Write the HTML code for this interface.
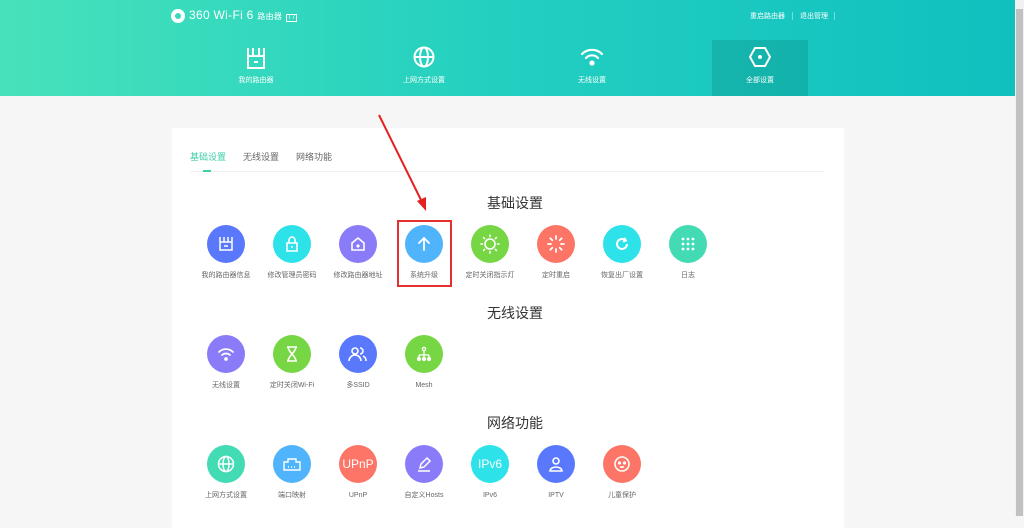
<!DOCTYPE html>
<html><head><meta charset="utf-8"><style>
*{margin:0;padding:0;box-sizing:border-box}
body{width:1024px;height:516px;overflow:hidden;background:#f6f6f6;font-family:"Liberation Sans","Noto Sans CJK SC",sans-serif;position:relative}
.hd{position:absolute;left:0;top:0;width:1015px;height:96px;background:linear-gradient(90deg,#47e2bb 0%,#22cfc0 50%,#10c0bf 100%)}
.a{position:absolute}
.nav{position:absolute;top:40px;width:96px;height:56px;text-align:center;color:#fff;font-size:7px;line-height:10px}
.nav svg{display:block;margin:6px auto 0}
.nav span{position:absolute;left:0;right:0;top:36px}
.card{position:absolute;left:172px;top:128px;width:672px;height:400px;background:#fff}
.ic{position:absolute;width:38px;height:38px;border-radius:50%;display:flex;align-items:center;justify-content:center;color:#fff}
.lb{position:absolute;width:80px;text-align:center;font-size:7px;color:#666;line-height:10px;height:10px}
.tt{position:absolute;width:200px;text-align:center;font-size:14px;color:#333;line-height:18px}
.sb{position:absolute;left:1015px;top:0;width:9px;height:516px;background:#f1f1f1}
</style></head><body>
<div class="hd">
 <div class="a" style="left:171px;top:9px;width:14px;height:14px;border-radius:50%;background:#fff"></div>
 <div class="a" style="left:175px;top:13px;width:6px;height:6px;border-radius:50%;background:#3ad8bd"></div>
 <div class="a" style="left:189px;top:8px;color:#fff;font-size:12px;line-height:14px;letter-spacing:0.3px">360 Wi-Fi 6 <span style="font-size:8px">路由器</span> <span style="font-size:6px;border:1px solid #fff;padding:0 1px">T7</span></div>
 <div class="a" style="left:750px;top:12px;color:#fff;font-size:7px;line-height:9px">重启路由器</div>
 <div class="a" style="left:792px;top:12px;width:1px;height:8px;background:rgba(255,255,255,.4)"></div>
 <div class="a" style="left:800px;top:12px;color:#fff;font-size:7px;line-height:9px">退出管理</div>
 <div class="a" style="left:834px;top:12px;width:1px;height:8px;background:rgba(255,255,255,.4)"></div>
 <div class="nav" style="left:208px"><svg width="20" height="24" viewBox="0 0 20 24" fill="none" stroke="#fff" stroke-width="2"><path d="M2 2v8M7 2v8M13 2v8M18 2v8M2 10h16v12H2z M8 16h4"/></svg><span>我的路由器</span></div>
 <div class="nav" style="left:376px"><svg width="22" height="22" viewBox="0 0 22 22" fill="none" stroke="#fff" stroke-width="2"><circle cx="11" cy="11" r="9.5"/><ellipse cx="11" cy="11" rx="4" ry="9.5"/><path d="M1.5 11h19"/></svg><span>上网方式设置</span></div>
 <div class="nav" style="left:544px"><svg width="24" height="22" viewBox="0 0 24 22" fill="none" stroke="#fff" stroke-width="2.2" stroke-linecap="round"><path d="M2 8a14 14 0 0 1 20 0M6 12a8 8 0 0 1 12 0"/><circle cx="12" cy="17" r="1.5" fill="#fff"/></svg><span>无线设置</span></div>
 <div class="nav" style="left:712px;background:rgba(0,90,90,.18)"><svg width="24" height="22" viewBox="0 0 24 22" fill="none" stroke="#fff" stroke-width="2"><path d="M7 2h10l5 9-5 9H7L2 11z"/><circle cx="12" cy="11" r="1" fill="#fff"/></svg><span>全部设置</span></div>
</div>
<div class="card"></div>
<div class="a" style="left:190px;top:152px;font-size:9px;line-height:11px;color:#3ecfa8">基础设置</div>
<div class="a" style="left:243px;top:152px;font-size:9px;line-height:11px;color:#666">无线设置</div>
<div class="a" style="left:296px;top:152px;font-size:9px;line-height:11px;color:#666">网络功能</div>
<div class="a" style="left:190px;top:171px;width:635px;height:1px;background:#f0f0f0"></div>
<div class="a" style="left:203px;top:170px;width:8px;height:2px;background:#3ecfa8"></div>
<div class="tt" style="left:415px;top:194px">基础设置</div>
<div class="tt" style="left:415px;top:304px">无线设置</div>
<div class="tt" style="left:415px;top:414px">网络功能</div>

<div class="ic" style="left:207px;top:225px;background:#5a78fb"><svg width="16" height="16" viewBox="0 0 16 16" fill="none" stroke="#fff" stroke-width="1.5"><path d="M2 1v5M6 1v5M10 1v5M14 1v5M2 6h12v8H2zM6 10h4"/></svg></div>
<div class="ic" style="left:273px;top:225px;background:#2ee2ea"><svg width="14" height="16" viewBox="0 0 14 16" fill="none" stroke="#fff" stroke-width="1.6"><path d="M4 7V4a3 3 0 0 1 6 0v3M2 7h10v8H2zM7 10v2"/></svg></div>
<div class="ic" style="left:339px;top:225px;background:#8a7cf9"><svg width="16" height="16" viewBox="0 0 16 16" fill="none" stroke="#fff" stroke-width="1.6"><path d="M2 7l6-5 6 5v7H2z"/><circle cx="8" cy="10" r=".8" fill="#fff"/></svg></div>
<div class="ic" style="left:405px;top:225px;background:#4fb4fb"><svg width="16" height="16" viewBox="0 0 16 16" fill="none" stroke="#fff" stroke-width="1.8" stroke-linecap="round"><path d="M8 14V2M3 7l5-5 5 5"/></svg></div>
<div class="ic" style="left:471px;top:225px;background:#76d644"><svg width="20" height="20" viewBox="0 0 20 20" fill="none" stroke="#fff" stroke-width="1.6" stroke-linecap="round"><circle cx="10" cy="10" r="5"/><path d="M10 1v1.5M10 17.5V19M1 10h1.5M17.5 10H19M3.6 3.6l1 1M15.4 15.4l1 1M3.6 16.4l1-1M15.4 4.6l1-1"/></svg></div>
<div class="ic" style="left:537px;top:225px;background:#fc7566"><svg width="20" height="20" viewBox="0 0 20 20" fill="none" stroke="#fff" stroke-width="1.8" stroke-linecap="round"><path d="M10 2v3M10 15v3M2 10h3M15 10h3M4.3 4.3l2 2M13.7 13.7l2 2M4.3 15.7l2-2M13.7 6.3l2-2"/></svg></div>
<div class="ic" style="left:603px;top:225px;background:#2ee2ea"><svg width="18" height="18" viewBox="0 0 18 18" fill="none" stroke="#fff" stroke-width="2"><path d="M14 9a5 5 0 1 1-2-4"/><path d="M11 3l2 2.5-3 1" stroke-linejoin="round"/></svg></div>
<div class="ic" style="left:669px;top:225px;background:#42dbb4"><svg width="16" height="16" viewBox="0 0 16 16" fill="#fff"><circle cx="3" cy="3" r="1.4"/><circle cx="8" cy="3" r="1.4"/><circle cx="13" cy="3" r="1.4"/><circle cx="3" cy="8" r="1.4"/><circle cx="8" cy="8" r="1.4"/><circle cx="13" cy="8" r="1.4"/><circle cx="3" cy="13" r="1.4"/><circle cx="8" cy="13" r="1.4"/><circle cx="13" cy="13" r="1.4"/></svg></div>
<div class="lb" style="left:186px;top:271px">我的路由器信息</div>
<div class="lb" style="left:252px;top:271px">修改管理员密码</div>
<div class="lb" style="left:318px;top:271px">修改路由器地址</div>
<div class="lb" style="left:384px;top:271px">系统升级</div>
<div class="lb" style="left:450px;top:271px">定时关闭指示灯</div>
<div class="lb" style="left:516px;top:271px">定时重启</div>
<div class="lb" style="left:582px;top:271px">恢复出厂设置</div>
<div class="lb" style="left:648px;top:271px">日志</div>
<div class="a" style="left:397px;top:220px;width:55px;height:67px;border:2px solid #e53030"></div>

<div class="ic" style="left:207px;top:335px;background:#8a7cf9"><svg width="18" height="16" viewBox="0 0 18 16" fill="none" stroke="#fff" stroke-width="1.7" stroke-linecap="round"><path d="M2 6a10 10 0 0 1 14 0M5 9a6 6 0 0 1 8 0"/><circle cx="9" cy="13" r="1" fill="#fff"/></svg></div>
<div class="ic" style="left:273px;top:335px;background:#76d644"><svg width="14" height="16" viewBox="0 0 14 16" fill="none" stroke="#fff" stroke-width="1.6"><path d="M2 1h10M2 15h10M3 1c0 5 8 9 8 14M11 1c0 5-8 9-8 14"/></svg></div>
<div class="ic" style="left:339px;top:335px;background:#5a78fb"><svg width="20" height="16" viewBox="0 0 20 16" fill="none" stroke="#fff" stroke-width="1.6"><circle cx="7" cy="5" r="3"/><path d="M1 15a6 6 0 0 1 12 0M12 2a3 3 0 0 1 0 6M15 10a5 5 0 0 1 3 5"/></svg></div>
<div class="ic" style="left:405px;top:335px;background:#76d644"><svg width="16" height="16" viewBox="0 0 16 16" fill="#fff" stroke="#fff" stroke-width="1.3"><circle cx="8" cy="3" r="1.6" fill="none"/><path d="M8 5v4M3 9h10M3 9v3M13 9v3M8 9v3" fill="none"/><circle cx="3" cy="13" r="1.5"/><circle cx="8" cy="13" r="1.5"/><circle cx="13" cy="13" r="1.5"/></svg></div>
<div class="lb" style="left:186px;top:381px">无线设置</div>
<div class="lb" style="left:252px;top:381px">定时关闭Wi-Fi</div>
<div class="lb" style="left:318px;top:381px">多SSID</div>
<div class="lb" style="left:384px;top:381px">Mesh</div>

<div class="ic" style="left:207px;top:445px;background:#42dbb4"><svg width="18" height="18" viewBox="0 0 18 18" fill="none" stroke="#fff" stroke-width="1.5"><circle cx="9" cy="9" r="7.5"/><ellipse cx="9" cy="9" rx="3" ry="7.5"/><path d="M1.5 9h15"/></svg></div>
<div class="ic" style="left:273px;top:445px;background:#4fb4fb"><svg width="18" height="14" viewBox="0 0 18 14" fill="none" stroke="#fff" stroke-width="1.4"><path d="M1 13V5h4V2h8v3h4v8zM5 10h1M8 10h1M11 10h1"/></svg></div>
<div class="ic" style="left:339px;top:445px;background:#fc7566;font-size:12px">UPnP</div>
<div class="ic" style="left:405px;top:445px;background:#8a7cf9"><svg width="16" height="16" viewBox="0 0 16 16" fill="none" stroke="#fff" stroke-width="1.5"><path d="M4 12l1-4 6-6 3 3-6 6zM2 15h12"/></svg></div>
<div class="ic" style="left:471px;top:445px;background:#2ee2ea;font-size:12px">IPv6</div>
<div class="ic" style="left:537px;top:445px;background:#5a78fb"><svg width="14" height="16" viewBox="0 0 14 16" fill="none" stroke="#fff" stroke-width="1.6"><circle cx="7" cy="5" r="3"/><path d="M1 15a6 4 0 0 1 12 0z"/></svg></div>
<div class="ic" style="left:603px;top:445px;background:#fc7566"><svg width="18" height="18" viewBox="0 0 18 18" fill="none" stroke="#fff" stroke-width="1.6"><circle cx="9" cy="9" r="7"/><circle cx="6.5" cy="8" r=".8" fill="#fff"/><circle cx="11.5" cy="8" r=".8" fill="#fff"/><path d="M7 11.5q2 1.5 4 0"/></svg></div>
<div class="lb" style="left:186px;top:491px">上网方式设置</div>
<div class="lb" style="left:252px;top:491px">端口映射</div>
<div class="lb" style="left:318px;top:491px">UPnP</div>
<div class="lb" style="left:384px;top:491px">自定义Hosts</div>
<div class="lb" style="left:450px;top:491px">IPv6</div>
<div class="lb" style="left:516px;top:491px">IPTV</div>
<div class="lb" style="left:582px;top:491px">儿童保护</div>

<svg class="a" style="left:370px;top:110px" width="70" height="110" viewBox="0 0 70 110"><path d="M9 5L53 94" stroke="#e52020" stroke-width="2"/><path d="M47 91l9 10 0-14z" fill="#e52020"/></svg>

<div class="sb"><div class="a" style="left:1px;top:9px;width:7px;height:507px;background:#c1c1c1"></div></div>
</body></html>
